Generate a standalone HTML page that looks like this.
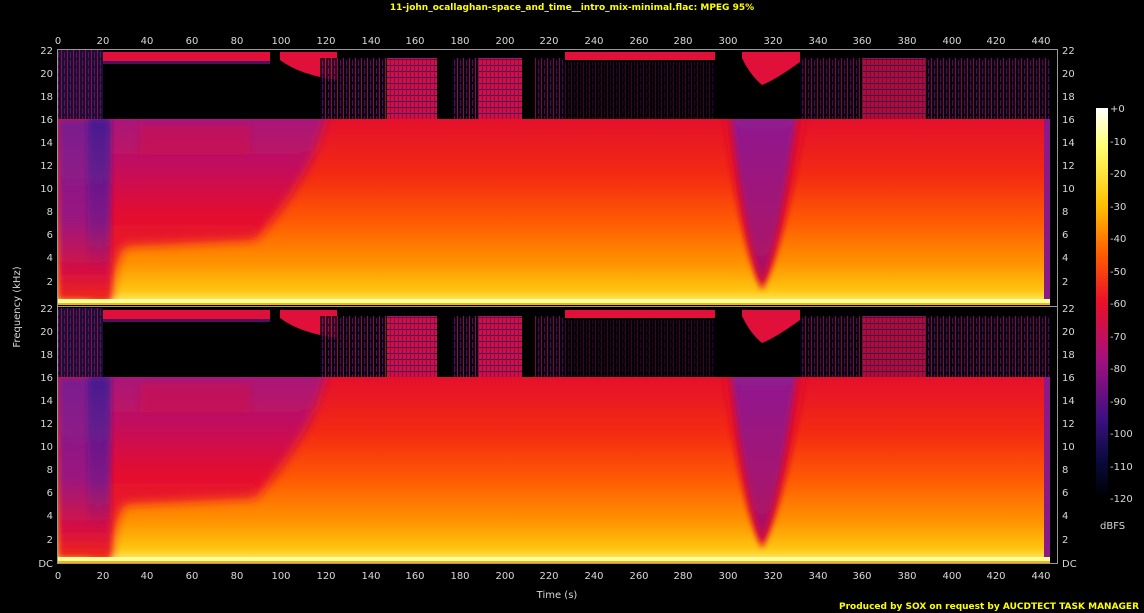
<!DOCTYPE html>
<html><head><meta charset="utf-8"><style>
html,body{margin:0;padding:0;background:#000;width:1144px;height:613px;overflow:hidden}
svg{display:block}
text{font-family:"DejaVu Sans","Liberation Sans",sans-serif;font-size:10px;fill:#d8d8d8}
.t{font-weight:bold;fill:#ffff00;font-size:9px}
</style></head><body>
<svg width="1144" height="613" viewBox="0 0 1144 613">
<defs>
<filter id="bl" x="-10%" y="-10%" width="120%" height="120%"><feGaussianBlur stdDeviation="5"/></filter>
<filter id="bl2" x="-20%" y="-10%" width="140%" height="120%"><feGaussianBlur stdDeviation="3"/></filter>
<clipPath id="bodyclip"><rect x="58" y="69" width="992" height="181"/></clipPath>
<linearGradient id="body" x1="0" y1="0" x2="0" y2="1">
<stop offset="0" stop-color="#e4102c"/><stop offset="0.3" stop-color="#f42a12"/>
<stop offset="0.55" stop-color="#ff5a04"/><stop offset="0.78" stop-color="#ff9400"/>
<stop offset="0.92" stop-color="#ffc410"/><stop offset="0.98" stop-color="#ffe860"/><stop offset="1" stop-color="#ffffa0"/>
</linearGradient>
<linearGradient id="ramp" x1="0" y1="0" x2="0" y2="1">
<stop offset="0" stop-color="#9a1a8a"/><stop offset="0.35" stop-color="#c01060"/><stop offset="0.6" stop-color="#e4102e"/><stop offset="1" stop-color="#f01c22"/>
</linearGradient>
<linearGradient id="left" x1="0" y1="0" x2="0" y2="1">
<stop offset="0" stop-color="#7a1c90"/><stop offset="0.55" stop-color="#9a1880"/><stop offset="0.85" stop-color="#d81040"/><stop offset="1" stop-color="#f02818"/>
</linearGradient>
<linearGradient id="blue" x1="0" y1="0" x2="0" y2="1">
<stop offset="0" stop-color="#3a1a90" stop-opacity="0.8"/><stop offset="0.7" stop-color="#5a1a90" stop-opacity="0.4"/><stop offset="1" stop-color="#5a1a90" stop-opacity="0"/>
</linearGradient>
<linearGradient id="vee" x1="0" y1="0" x2="0" y2="1">
<stop offset="0" stop-color="#8a1c98"/><stop offset="1" stop-color="#b01060"/>
</linearGradient>
<linearGradient id="cb" x1="0" y1="0" x2="0" y2="1">
<stop offset="0" stop-color="#ffffff"/><stop offset="0.1" stop-color="#ffff70"/><stop offset="0.25" stop-color="#ffc000"/>
<stop offset="0.37" stop-color="#ff6000"/><stop offset="0.5" stop-color="#e8102a"/><stop offset="0.65" stop-color="#a01080"/>
<stop offset="0.8" stop-color="#3a1080"/><stop offset="0.9" stop-color="#0a0a40"/><stop offset="1" stop-color="#000"/>
</linearGradient>
<pattern id="noise" width="6" height="8" patternUnits="userSpaceOnUse">
<rect width="6" height="8" fill="#0a0418"/><rect x="1" width="1" height="8" fill="#b0104a"/><rect x="4" y="2" width="1" height="6" fill="#6a1070"/>
</pattern>
<pattern id="hatch" width="4" height="6" patternUnits="userSpaceOnUse">
<rect width="4" height="6" fill="#d0103e"/><rect y="3" width="4" height="1" fill="#40106a"/><rect x="2" width="1" height="6" fill="#801050"/>
</pattern>
<g id="ch">
<rect x="58" y="0" width="996" height="255" fill="#000"/>
<rect x="58" y="0" width="45" height="69" fill="#3a1a5a"/>
<rect x="58" y="0" width="45" height="69" fill="url(#noise)" opacity="0.6"/>
<rect x="103" y="2" width="167" height="9" fill="#e0103a"/>
<rect x="103" y="11" width="167" height="3" fill="#501060"/>
<path d="M280 2 L337 2 L337 30 Q300 25 280 10Z" fill="#e0103a"/>
<rect x="320" y="8" width="67" height="61" fill="url(#noise)" opacity="0.8"/>
<rect x="387" y="8" width="50" height="61" fill="url(#hatch)"/>
<rect x="452" y="8" width="26" height="61" fill="url(#noise)" opacity="0.8"/>
<rect x="478" y="8" width="44" height="61" fill="url(#hatch)"/>
<rect x="535" y="8" width="30" height="61" fill="url(#noise)" opacity="0.7"/>
<rect x="565" y="2" width="150" height="8" fill="#e0103a"/>
<rect x="565" y="12" width="150" height="57" fill="url(#noise)" opacity="0.35"/>
<path d="M742 2 L800 2 L800 12 Q775 30 762 35 Q750 25 742 8Z" fill="#e0103a"/>
<rect x="800" y="8" width="60" height="61" fill="url(#noise)" opacity="0.7"/>
<rect x="862" y="8" width="63" height="61" fill="url(#hatch)" opacity="0.85"/>
<rect x="925" y="8" width="125" height="61" fill="url(#noise)" opacity="0.75"/>
<rect x="58" y="69" width="992" height="186" fill="url(#body)"/>
<g clip-path="url(#bodyclip)">
<path d="M90 40 H332 Q318 105 300 130 Q280 165 255 190 L125 196 Q114 210 111 250 H90Z" fill="url(#ramp)" filter="url(#bl)"/>
<rect x="58" y="69" width="52" height="181" fill="url(#left)" filter="url(#bl2)"/>
<rect x="88" y="69" width="22" height="150" fill="url(#blue)" filter="url(#bl2)"/>
<rect x="140" y="75" width="110" height="30" fill="#d01048" opacity="0.5" filter="url(#bl2)"/>
<path d="M720 40 Q740 200 762 240 Q785 200 810 40Z" fill="#e0102a" filter="url(#bl2)"/>
<path d="M728 40 Q745 190 762 232 Q780 190 800 40Z" fill="url(#vee)" filter="url(#bl2)"/>
</g>
<rect x="1044" y="69" width="6" height="186" fill="#8a1a8a"/>
<rect x="1050" y="0" width="4" height="255" fill="#000"/>
<rect x="58" y="249" width="992" height="4" fill="#ffffa0"/>
<rect x="58" y="253" width="992" height="2" fill="#ffb000"/>
</g>
</defs>
<text class="t" x="572" y="10" text-anchor="middle">11-john_ocallaghan-space_and_time__intro_mix-minimal.flac: MPEG 95%</text>
<use href="#ch" transform="translate(0,50)"/>
<use href="#ch" transform="translate(0,308)"/>
<g stroke="#999" stroke-width="1" fill="none">
<path d="M57.5 49 V564 M1057.5 49 V564 M57 49.5 H1058 M57 563.5 H1058"/>
<path d="M57 306.5 H1058"/>
</g>
<g text-anchor="middle">
<text x="58" y="44">0</text><text x="103" y="44">20</text><text x="147" y="44">40</text><text x="192" y="44">60</text><text x="237" y="44">80</text><text x="281" y="44">100</text><text x="326" y="44">120</text><text x="371" y="44">140</text><text x="415" y="44">160</text><text x="460" y="44">180</text><text x="505" y="44">200</text><text x="549" y="44">220</text><text x="594" y="44">240</text><text x="639" y="44">260</text><text x="683" y="44">280</text><text x="728" y="44">300</text><text x="773" y="44">320</text><text x="818" y="44">340</text><text x="862" y="44">360</text><text x="907" y="44">380</text><text x="952" y="44">400</text><text x="996" y="44">420</text><text x="1041" y="44">440</text>
<text x="58" y="579">0</text><text x="103" y="579">20</text><text x="147" y="579">40</text><text x="192" y="579">60</text><text x="237" y="579">80</text><text x="281" y="579">100</text><text x="326" y="579">120</text><text x="371" y="579">140</text><text x="415" y="579">160</text><text x="460" y="579">180</text><text x="505" y="579">200</text><text x="549" y="579">220</text><text x="594" y="579">240</text><text x="639" y="579">260</text><text x="683" y="579">280</text><text x="728" y="579">300</text><text x="773" y="579">320</text><text x="818" y="579">340</text><text x="862" y="579">360</text><text x="907" y="579">380</text><text x="952" y="579">400</text><text x="996" y="579">420</text><text x="1041" y="579">440</text>
<text x="557" y="598">Time (s)</text>
</g>
<g text-anchor="end">
<text x="53" y="54">22</text><text x="53" y="77">20</text><text x="53" y="100">18</text><text x="53" y="123">16</text><text x="53" y="146">14</text><text x="53" y="169">12</text><text x="53" y="192">10</text><text x="53" y="215">8</text><text x="53" y="238">6</text><text x="53" y="261">4</text><text x="53" y="285">2</text>
<text x="53" y="312">22</text><text x="53" y="335">20</text><text x="53" y="358">18</text><text x="53" y="381">16</text><text x="53" y="404">14</text><text x="53" y="427">12</text><text x="53" y="450">10</text><text x="53" y="473">8</text><text x="53" y="496">6</text><text x="53" y="519">4</text><text x="53" y="543">2</text><text x="53" y="567">DC</text>
</g>
<g>
<text x="1062" y="54">22</text><text x="1062" y="77">20</text><text x="1062" y="100">18</text><text x="1062" y="123">16</text><text x="1062" y="146">14</text><text x="1062" y="169">12</text><text x="1062" y="192">10</text><text x="1062" y="215">8</text><text x="1062" y="238">6</text><text x="1062" y="261">4</text><text x="1062" y="285">2</text>
<text x="1062" y="312">22</text><text x="1062" y="335">20</text><text x="1062" y="358">18</text><text x="1062" y="381">16</text><text x="1062" y="404">14</text><text x="1062" y="427">12</text><text x="1062" y="450">10</text><text x="1062" y="473">8</text><text x="1062" y="496">6</text><text x="1062" y="519">4</text><text x="1062" y="543">2</text><text x="1062" y="567">DC</text>
</g>
<text x="0" y="0" transform="translate(20,307) rotate(-90)" text-anchor="middle">Frequency (kHz)</text>
<rect x="1096" y="108" width="12" height="390" fill="url(#cb)"/>
<g>
<text x="1110" y="112">+0</text><text x="1110" y="145">-10</text><text x="1110" y="177">-20</text><text x="1110" y="210">-30</text><text x="1110" y="242">-40</text><text x="1110" y="275">-50</text><text x="1110" y="307">-60</text><text x="1110" y="340">-70</text><text x="1110" y="372">-80</text><text x="1110" y="405">-90</text><text x="1110" y="437">-100</text><text x="1110" y="470">-110</text><text x="1110" y="502">-120</text>
<text x="1100" y="529">dBFS</text>
</g>
<text class="t" x="1139" y="609" text-anchor="end">Produced by SOX on request by AUCDTECT TASK MANAGER</text>
</svg>
</body></html>
